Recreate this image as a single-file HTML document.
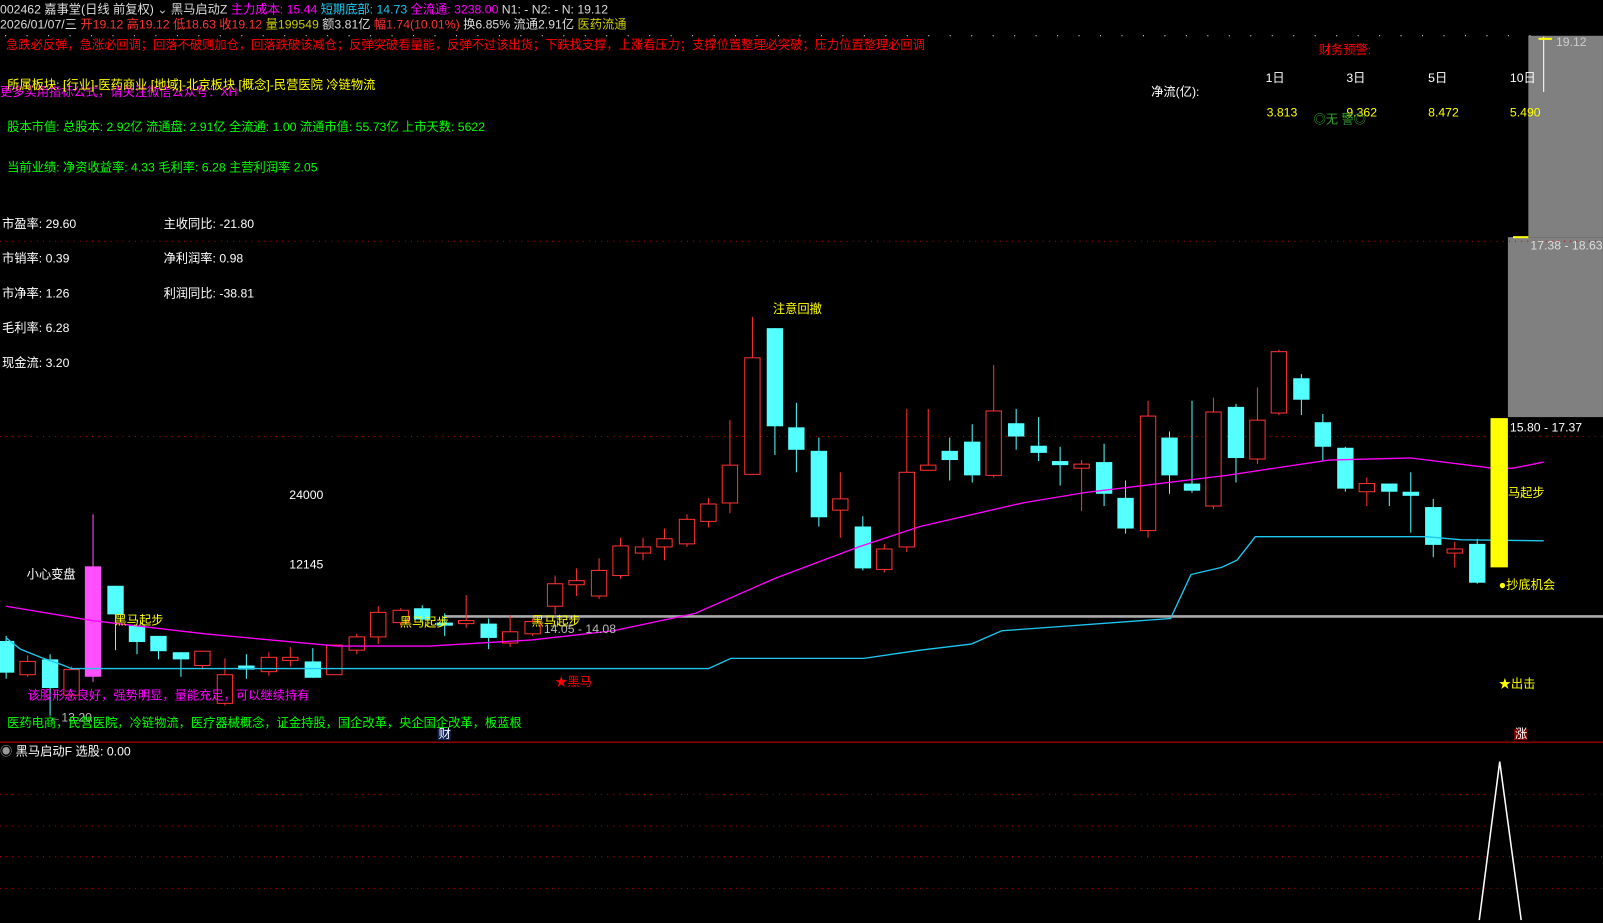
<!DOCTYPE html>
<html><head><meta charset="utf-8">
<style>
html,body{margin:0;padding:0;background:#000;width:1603px;height:923px;overflow:hidden}
svg{display:block}
text{font-family:"Liberation Sans","Noto Sans CJK SC",sans-serif;font-size:12px}
</style></head><body>
<svg id="s" width="1603" height="923" xmlns="http://www.w3.org/2000/svg">
<rect width="1603" height="923" fill="#000"/>
<g transform="scale(1.0223)">
<rect x="1495" y="35" width="73" height="197" fill="#808080"/>
<rect x="1475" y="232" width="93" height="176" fill="#808080"/>
<line x1="1480" y1="232" x2="1495" y2="232" stroke="#ff0" stroke-width="2"/>
<line x1="1510" y1="36" x2="1510" y2="90" stroke="#fff"/>
<line x1="1505" y1="38" x2="1518" y2="38" stroke="#ff0" stroke-width="2"/>
<g stroke="#c00000" stroke-dasharray="1,5">
<line x1="0" y1="236" x2="1568" y2="236"/>
<line x1="0" y1="427" x2="1568" y2="427"/>
<line x1="0" y1="777" x2="1568" y2="777"/>
<line x1="0" y1="808" x2="1568" y2="808"/>
<line x1="0" y1="838" x2="1568" y2="838"/>
<line x1="0" y1="869" x2="1568" y2="869"/>
</g>
<g stroke="#fff" stroke-dasharray="1,20"><line x1="5" y1="35" x2="1500" y2="35"/></g>
<line x1="0" y1="726" x2="1568" y2="726" stroke="#c00000"/>
<line x1="435" y1="603" x2="1568" y2="603" stroke="#aaa" stroke-width="2.5"/>
<g id="c"></g>
<polyline fill="none" stroke="#f0f" stroke-width="1.3" points="6,593 90,607 200,620 330,632 420,632 520,626 600,617 680,600 760,565 840,535 900,515 1000,492 1060,482 1200,465 1300,450 1380,448 1460,458 1480,458 1510,452"/>
<polyline fill="none" stroke="#1ec8f0" stroke-width="1.3" points="6,624 20,635 40,643 60,650 70,654 693,654 715,644 845,644 900,636 950,630 980,617 1145,605 1165,562 1195,555 1210,548 1228,525 1395,525 1430,528 1510,529"/>
<rect x="1458" y="409" width="17" height="146" fill="#ff0"/>
<polyline fill="none" stroke="#fff" stroke-width="1.5" points="1447,900 1467,745 1488,900"/>

<text x="0" y="13" fill="#ddd">002462 嘉事堂(日线 前复权) <tspan fill="#bbb">⌄</tspan> 黑马启动Z <tspan fill="#f0f">主力成本: 15.44</tspan> <tspan fill="#1ec8f0">短期底部: 14.73</tspan> <tspan fill="#f0f">全流通: 3238.00</tspan> N1: -  N2: -  N: 19.12</text>
<text x="0" y="28" fill="#ddd">2026/01/07/三 <tspan fill="#f33">开19.12 高19.12 低18.63 收19.12</tspan> <tspan fill="#cc0">量199549</tspan> 额3.81亿 <tspan fill="#f33">幅1.74(10.01%)</tspan> 换6.85% 流通2.91亿 <tspan fill="#cc0">医药流通</tspan></text>
<text x="6" y="48" fill="#f00">急跌必反弹，急涨必回调；回落不破则加仓，回落跌破该减仓；反弹突破看量能，反弹不过该出货；下跌找支撑，上涨看压力；支撑位置整理必突破；压力位置整理必回调</text>
<text x="1290" y="53" fill="#f00">财务预警:</text>
<text x="1522" y="45" fill="#ccc">19.12</text>
<text x="0" y="94" fill="#f0f">更多实用指标公式，请关注微信公众号：XH</text>
<text x="7" y="87" fill="#ff0">所属板块: [行业]-医药商业 [地域]-北京板块 [概念]-民营医院 冷链物流</text>
<text x="1238" y="80" fill="#fff">1日</text><text x="1317" y="80" fill="#fff">3日</text><text x="1397" y="80" fill="#fff">5日</text><text x="1477" y="80" fill="#fff">10日</text>
<text x="1126" y="94" fill="#fff">净流(亿):</text>
<text x="1239" y="114" fill="#ff0">3.813</text><text x="1317" y="114" fill="#ff0">9.362</text><text x="1397" y="114" fill="#ff0">8.472</text><text x="1477" y="114" fill="#ff0">5.490</text>
<text x="1285" y="121" fill="#3a3">◎无 警◎</text>
<text x="7" y="128" fill="#0f0">股本市值: 总股本: 2.92亿 流通盘: 2.91亿 全流通: 1.00 流通市值: 55.73亿 上市天数: 5622</text>
<text x="7" y="168" fill="#0f0">当前业绩: 净资收益率: 4.33 毛利率: 6.28 主营利润率 2.05</text>
<g fill="#fff">
<text x="2" y="223">市盈率: 29.60</text><text x="160" y="223">主收同比: -21.80</text>
<text x="2" y="257">市销率: 0.39</text><text x="160" y="257">净利润率: 0.98</text>
<text x="2" y="291">市净率: 1.26</text><text x="160" y="291">利润同比: -38.81</text>
<text x="2" y="325">毛利率: 6.28</text>
<text x="2" y="359">现金流: 3.20</text>
<text x="283" y="488">24000</text><text x="283" y="556">12145</text>
<text x="26" y="566">小心变盘</text>
</g>
<text x="756" y="306" fill="#ff0">注意回撤</text>
<text x="112" y="611" fill="#ff0">黑马起步</text>
<text x="391" y="613" fill="#ff0">黑马起步</text>
<text x="520" y="612" fill="#ff0">黑马起步</text>
<text x="532" y="619" fill="#bbb">14.05 - 14.08</text>
<text x="1497" y="244" fill="#ddd">17.38 - 18.63</text>
<text x="1477" y="422" fill="#fff">15.80 - 17.37</text>
<text x="1475" y="486" fill="#ff0">马起步</text>
<text x="1466" y="576" fill="#ff0">●抄底机会</text>
<text x="543" y="671" fill="#f00">★黑马</text>
<text x="1466" y="673" fill="#ff0">★出击</text>
<text x="27" y="684" fill="#f0f">该股形态良好，强势明显，量能充足，可以继续持有</text>
<text x="48" y="706" fill="#bbb">←13.20</text>
<text x="7" y="711" fill="#0f0">医药电商，民营医院，冷链物流，医疗器械概念，证金持股，国企改革，央企国企改革，板蓝根</text>
<rect x="428" y="713" width="13" height="11" fill="#125"/><text x="429" y="722" fill="#fff" font-size="11">财</text>
<rect x="1481" y="713" width="13" height="11" fill="#700"/><text x="1482" y="722" fill="#fff" font-size="11">涨</text>
<text x="0" y="739" fill="#fff"><tspan fill="#999">◉</tspan> 黑马启动F  选股: 0.00</text>
</g>
</svg>
<script>
var d=[[6,622,627,658,664,'c'],[27,641,647,660,662,'r'],[49,640,645,673,700,'c'],[70,652,655,680,682,'r'],[91,503,554,662,667,'m'],[113,573,573,601,636,'c'],[134,612,612,628,640,'c'],[155,622,622,637,645,'c'],[177,638,638,645,662,'c'],[198,637,637,651,655,'r'],[220,644,660,688,690,'r'],[241,640,651,655,664,'c'],[263,638,643,657,661,'r'],[284,633,643,646,652,'r'],[306,634,647,663,663,'c'],[327,631,631,660,660,'r'],[349,620,623,636,640,'r'],[370,593,599,623,630,'r'],[392,595,597,609,612,'r'],[413,592,595,606,608,'c'],[435,600,609,612,622,'c'],[456,582,607,610,614,'r'],[478,605,610,624,635,'c'],[499,602,618,629,633,'r'],[521,605,608,620,622,'r'],[543,563,571,593,601,'r'],[564,556,568,572,583,'r'],[586,546,558,583,586,'r'],[607,526,534,563,566,'r'],[629,526,535,541,548,'r'],[650,517,527,535,548,'r'],[672,503,508,532,535,'r'],[693,487,493,510,516,'r'],[714,411,455,492,502,'r'],[736,310,350,464,464,'r'],[758,321,321,417,445,'c'],[779,394,418,440,462,'c'],[801,428,441,506,515,'c'],[822,462,488,499,526,'r'],[844,505,515,556,558,'c'],[865,532,537,557,560,'r'],[887,400,462,535,540,'r'],[908,400,455,460,460,'r'],[929,428,441,450,470,'c'],[951,415,432,465,472,'c'],[972,357,402,465,467,'r'],[994,400,414,427,440,'c'],[1016,408,436,443,451,'c'],[1037,437,451,455,475,'c'],[1058,450,454,458,500,'r'],[1080,434,452,483,495,'c'],[1101,470,487,517,522,'c'],[1123,392,407,519,526,'r'],[1144,422,428,465,483,'c'],[1166,392,473,480,482,'c'],[1187,389,403,495,498,'r'],[1209,395,398,448,472,'c'],[1230,379,411,449,454,'r'],[1251,342,344,404,406,'r'],[1273,366,370,391,406,'c'],[1294,405,413,437,451,'c'],[1316,437,438,478,481,'c'],[1337,467,473,481,495,'r'],[1359,473,473,481,495,'c'],[1380,462,481,485,521,'c'],[1402,488,496,533,545,'c'],[1423,530,537,541,555,'r'],[1445,527,532,570,571,'c']];
var g=document.getElementById('c'),h='';
d.forEach(function(k){var x=k[0],col=k[5]=='c'?'#54ffff':k[5]=='r'?'#ff3232':'#ff50ff';
h+='<line x1="'+x+'" y1="'+k[1]+'" x2="'+x+'" y2="'+k[4]+'" stroke="'+col+'"/>';
var hh=Math.max(k[3]-k[2],2);
if(k[5]=='r')h+='<rect x="'+(x-7.5)+'" y="'+k[2]+'" width="15" height="'+hh+'" fill="#000" stroke="'+col+'"/>';
else h+='<rect x="'+(x-8)+'" y="'+k[2]+'" width="16" height="'+hh+'" fill="'+col+'"/>';});
g.innerHTML=h;
</script>
</body></html>
